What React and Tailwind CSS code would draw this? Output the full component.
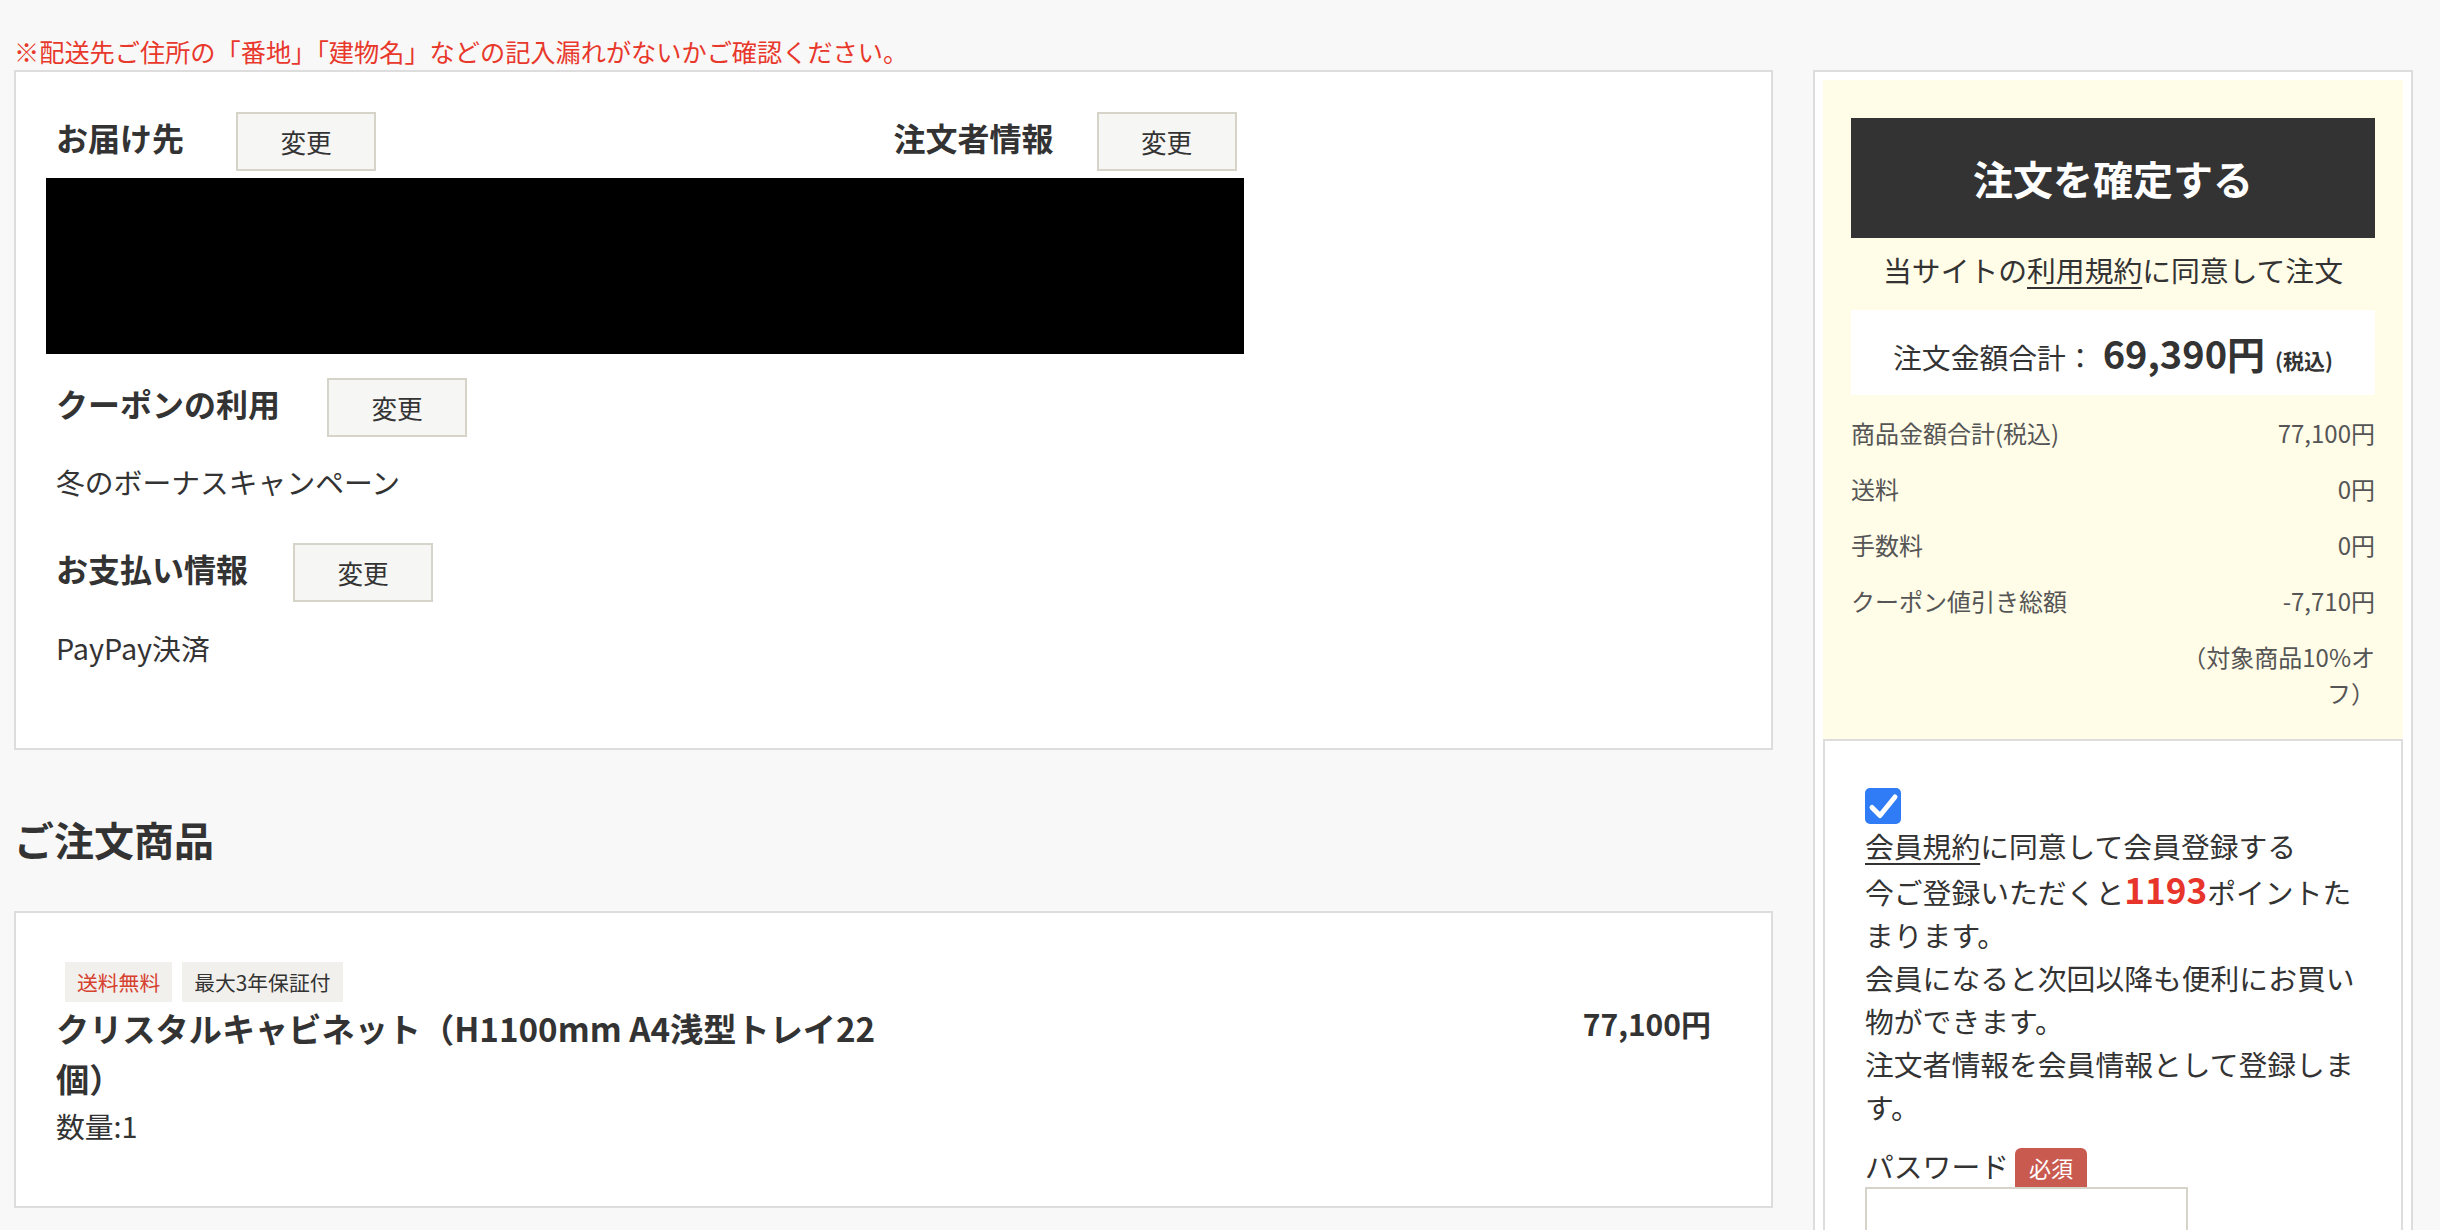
const ChangeButton = ({ className = '' }) => (
  <button
    className={`flex h-[59px] w-[140px] shrink-0 items-center justify-center border-2 border-[#d6d3c8] bg-[#f6f6f4] pt-[2px] text-[25.6px] text-[#333] ${className}`}
  >
    変更
  </button>
);

const SectionHead = ({ title, gap = 'ml-[42px]' }) => (
  <div className="flex items-start">
    <h3 className="text-[32px] font-bold leading-[50px]">{title}</h3>
    <ChangeButton className={gap} />
  </div>
);

const summaryRows = [
  ['商品金額合計(税込)', '77,100円'],
  ['送料', '0円'],
  ['手数料', '0円'],
  ['クーポン値引き総額', '-7,710円'],
];

export default function App() {
  return (
    <div className="min-h-screen bg-[#f8f8f8] pl-[14px] font-['Noto_Sans_CJK_JP',sans-serif] text-[#333]">
      <p className="pb-[1px] pt-[33px] text-[25.2px] leading-[36px] text-[#e8382c]">
        ※配送先ご住所の「番地」「建物名」などの記入漏れがないかご確認ください。
      </p>

      <div className="flex items-start gap-[40px]">
        {/* left column */}
        <div className="w-[1759px] shrink-0">
          <section className="border-2 border-[#dddddd] bg-white px-[40px] pb-[77px] pt-[40px]">
            <div className="grid grid-cols-2">
              <SectionHead title="お届け先" gap="ml-[52px]" />
              <SectionHead title="注文者情報" gap="ml-[43px]" />
            </div>
            <div className="-ml-[10px] mt-[7px] h-[176px] w-[1198px] bg-black" />

            <div className="mt-[24px]">
              <SectionHead title="クーポンの利用" gap="ml-[47px]" />
            </div>
            <p className="mt-[22px] text-[28.8px] leading-[46px]">冬のボーナスキャンペーン</p>

            <div className="mt-[38px]">
              <SectionHead title="お支払い情報" gap="ml-[45px]" />
            </div>
            <p className="mt-[23px] text-[28.8px] leading-[46px]">PayPay決済</p>
          </section>

          <h2 className="mt-[59px] text-[40px] font-bold leading-[60px]">ご注文商品</h2>

          <section className="mt-[42px] border-2 border-[#dddddd] bg-white px-[40px] pb-[57px] pt-[49px]">
            <div className="ml-[9px] flex gap-[10px]">
              <span className="bg-[#f2f0ec] px-[12px] text-[20.8px] leading-[40px] text-[#d6402f]">送料無料</span>
              <span className="bg-[#f2f0ec] px-[12px] text-[20.8px] leading-[40px] text-[#333]">最大3年保証付</span>
            </div>
            <div className="mt-[1px] flex justify-between">
              <div className="w-[840px]">
                <p className="text-[33.2px] font-bold leading-[50px]">
                  クリスタルキャビネット（H1100mm A4浅型トレイ22個）
                </p>
                <p className="text-[28.8px] leading-[46px]">数量:1</p>
              </div>
              <p className="mr-[20px] text-[30px] font-bold leading-[40px]">77,100円</p>
            </div>
          </section>
        </div>

        {/* sidebar */}
        <aside className="w-[600px] shrink-0 border-2 border-[#dddddd] bg-white p-[8px]">
          <div className="bg-[#fffce8] px-[28px] pb-[28px] pt-[38px]">
            <button className="h-[120px] w-full bg-[#333333] text-[40px] font-bold text-white">注文を確定する</button>
            <p className="mt-[9px] text-center text-[28.8px] leading-[46px]">
              当サイトの<span className="underline underline-offset-[5px]">利用規約</span>に同意して注文
            </p>
            <div className="mt-[17px] flex h-[85px] items-center justify-center bg-white">
              <div className="flex items-baseline">
                <span className="text-[28.8px]">注文金額合計：</span>
                <span className="ml-[8px] text-[38px] font-bold">69,390円</span>
                <span className="ml-[10px] text-[21px] font-bold">(税込)</span>
              </div>
            </div>

            {summaryRows.map(([label, value]) => (
              <div key={label} className="mt-[20px] flex justify-between text-[24px] leading-[36px] text-[#555]">
                <span>{label}</span>
                <span>{value}</span>
              </div>
            ))}
            <p className="ml-auto mt-[20px] w-[200px] text-right text-[24px] leading-[36px] text-[#555]">
              （対象商品10%オフ）
            </p>
          </div>

          <div className="border-2 border-[#dddddd] bg-white px-[40px] pb-[80px] pt-[47px]">
            <div className="flex h-[36px] w-[36px] items-center justify-center rounded-[5px] bg-[#2f7cf6]">
              <svg width="36" height="36" viewBox="0 0 36 36">
                <path d="M7 19.5 L15 27.5 L30 9" fill="none" stroke="white" strokeWidth="5" strokeLinecap="round" strokeLinejoin="round" />
              </svg>
            </div>
            <div className="text-[28.8px] leading-[43px]">
              <p>
                <span className="underline underline-offset-[5px]">会員規約</span>に同意して会員登録する
              </p>
              <p>
                今ご登録いただくと<span className="text-[35.2px] font-bold text-[#e8352b]">1193</span>ポイントたまります。
                <br />
                会員になると次回以降も便利にお買い物ができます。
                <br />
                注文者情報を会員情報として登録します。
              </p>
            </div>
            <div className="mt-[16px] flex items-end">
              <span className="text-[28.8px] leading-[43px]">パスワード</span>
              <span className="ml-[6px] flex h-[39px] w-[72px] items-center justify-center rounded-t-[6px] bg-[#c95a50] text-[22px] text-white">
                必須
              </span>
            </div>
            <div className="h-[64px] w-[323px] border-2 border-[#d6d3c8] bg-white" />
          </div>
        </aside>
      </div>
    </div>
  );
}
